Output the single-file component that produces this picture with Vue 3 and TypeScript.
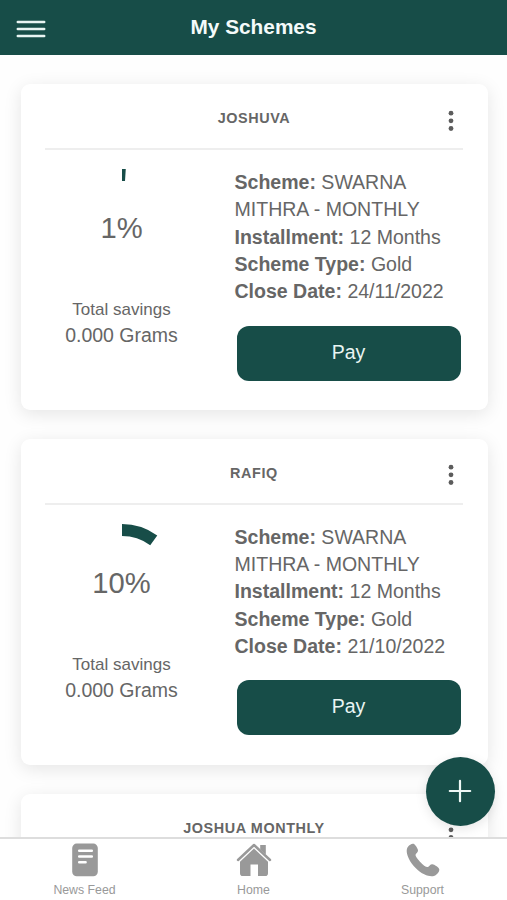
<script setup lang="ts">
import { computed, ref } from 'vue'

interface SchemeDetails {
  percent: number
  scheme: string
  installment: string
  type: string
  closeDate: string
  savings: string
}

interface Scheme {
  owner: string
  details?: SchemeDetails
}

const schemes = ref<Scheme[]>([
  {
    owner: 'JOSHUVA',
    details: { percent: 1, scheme: 'SWARNA MITHRA - MONTHLY', installment: '12 Months', type: 'Gold', closeDate: '24/11/2022', savings: '0.000 Grams' },
  },
  {
    owner: 'RAFIQ',
    details: { percent: 10, scheme: 'SWARNA MITHRA - MONTHLY', installment: '12 Months', type: 'Gold', closeDate: '21/10/2022', savings: '0.000 Grams' },
  },
  { owner: 'JOSHUA MONTHLY' },
])

// Progress arc, clockwise from twelve o'clock
function arc(percent: number): string {
  const a = (percent / 100) * Math.PI * 2
  const r = 54
  return `M60 ${60 - r} A${r} ${r} 0 ${percent > 50 ? 1 : 0} 1 ${60 + r * Math.sin(a)} ${60 - r * Math.cos(a)}`
}

const cards = computed(() => schemes.value.map((s) => ({ ...s, path: s.details ? arc(s.details.percent) : '' })))
</script>

<template>
  <div class="screen">
    <header class="topbar">
      <button class="menu" aria-label="Menu">
        <svg width="30" height="18" viewBox="0 0 30 18">
          <path d="M1.8 1.9H28.2M1.8 9H28.2M1.8 16.1H28.2" stroke="#e9f5f3" stroke-width="2.5" stroke-linecap="round" />
        </svg>
      </button>
      <h1>My Schemes</h1>
    </header>

    <main class="list">
      <article v-for="card in cards" :key="card.owner" class="card">
        <div class="card-head">
          <h2>{{ card.owner }}</h2>
          <button class="more" aria-label="More">
            <svg width="6" height="22" viewBox="0 0 6 22" fill="#5c5c5c">
              <circle cx="3" cy="3.2" r="2.4" />
              <circle cx="3" cy="10.8" r="2.4" />
              <circle cx="3" cy="18.5" r="2.4" />
            </svg>
          </button>
        </div>
        <div v-if="card.details" class="card-body">
          <div class="progress">
            <div class="ring">
              <svg width="120" height="120" viewBox="0 0 120 120">
                <path :d="card.path" fill="none" stroke="#174d48" stroke-width="12" />
              </svg>
              <span class="percent">{{ card.details.percent }}%</span>
            </div>
            <div class="savings-label">Total savings</div>
            <div class="savings">{{ card.details.savings }}</div>
          </div>
          <div class="details">
            <p><b>Scheme:</b> {{ card.details.scheme }}</p>
            <p><b>Installment:</b> {{ card.details.installment }}</p>
            <p><b>Scheme Type:</b> {{ card.details.type }}</p>
            <p><b>Close Date:</b> {{ card.details.closeDate }}</p>
            <button class="pay">Pay</button>
          </div>
        </div>
      </article>
    </main>

    <nav class="tabs">
      <a class="tab">
        <svg width="36" height="36" viewBox="0 0 36 36">
          <rect x="5.2" y="1.6" width="25.6" height="32.6" rx="4.5" fill="#999" />
          <path d="M12.2 8.7H24.8M12.2 14.6H24.8M12.2 20.2H18.6" stroke="#fff" stroke-width="2.5" stroke-linecap="round" />
        </svg>
        <span>News Feed</span>
      </a>
      <a class="tab">
        <svg width="36" height="36" viewBox="0 0 36 36" fill="#999">
          <path d="M24.2 3H29.8V12.6L24.2 7.6Z" />
          <path d="M2 18L18 3L34 18" fill="none" stroke="#999" stroke-width="2.4" stroke-linecap="round" stroke-linejoin="round" />
          <path d="M18 6.6L32 19.8V31.2A2.8 2.8 0 0 1 29.2 34H22V22.5H14.5V34H6.8A2.8 2.8 0 0 1 4 31.2V19.8Z" />
        </svg>
        <span>Home</span>
      </a>
      <a class="tab">
        <svg width="36" height="36" viewBox="0 0 36 36" fill="#999">
          <path d="M3 4.7C4.5 2.8 6.8 1.3 8.5 1.8C10.1 2.3 12.4 6 13 8C13.5 10 11.2 11.2 10.6 12.6C10.1 13.8 11.8 16.4 15 19.7C18.4 23.2 21.3 25.5 22.8 25C24.3 24.5 25.2 22 27.4 22.2C29.4 22.4 33.6 25.2 34.2 27C34.8 29 32.8 31.6 31 32.9C28.4 34.7 24.4 34.7 19.2 32.2C13.6 29.5 7.1 23.3 4 16.9C1.5 11.7 .9 7.4 3 4.7Z" />
        </svg>
        <span>Support</span>
      </a>
    </nav>

    <button class="fab" aria-label="Add">
      <svg width="24" height="24" viewBox="0 0 24 24">
        <path d="M12 1.8V22.2M1.8 12H22.2" stroke="#eef8f6" stroke-width="2.2" stroke-linecap="round" />
      </svg>
    </button>
  </div>
</template>

<style>
body {
  margin: 0;
  background: #fff;
}
</style>

<style scoped>
.screen {
  position: relative;
  display: flex;
  flex-direction: column;
  width: 100%;
  height: 900px;
  overflow: hidden;
  background: #fefefe;
  color: #666;
  font-family: 'Liberation Sans', Arial, sans-serif;
}
button {
  border: 0;
  padding: 0;
  background: none;
  font: inherit;
  display: flex;
  align-items: center;
  justify-content: center;
}
h1,
h2,
p {
  margin: 0;
}
.topbar {
  flex: none;
  display: grid;
  grid-template-columns: 60px 1fr 60px;
  align-items: center;
  height: 54.5px;
  background: #174d48;
}
.topbar h1 {
  text-align: center;
  color: #f4fbfa;
  font-size: 20.8px;
  line-height: 26px;
  padding-bottom: 3px;
}
.menu {
  height: 56px;
  width: 62px;
  padding-top: 1px;
}
.list {
  flex: 1;
  min-height: 0;
  overflow: hidden;
  display: flex;
  flex-direction: column;
  gap: 29px;
  padding: 29.5px 19.5px 0 20.5px;
}
.card {
  flex: none;
  box-sizing: border-box;
  height: 325.8px;
  padding: 0 24.5px;
  border-radius: 9px;
  background: #fff;
  box-shadow: 0 4px 18px rgba(0, 0, 0, 0.1);
}
.card-head {
  display: grid;
  grid-template-columns: 26px 1fr 26px;
  align-items: center;
  height: 64.4px;
  border-bottom: 2px solid #eee;
}
.card-head h2 {
  grid-column: 2;
  text-align: center;
  font-size: 14.4px;
  letter-spacing: 0.6px;
  line-height: 20px;
  padding-top: 4px;
}
.more {
  padding: 9px 0 0 1px;
}
.card-body {
  display: grid;
  grid-template-columns: 153px 1fr;
  column-gap: 36.5px;
}
.progress {
  text-align: center;
}
.ring {
  display: grid;
  place-items: center;
  height: 120px;
  margin-top: 18.6px;
  margin-left: 1px;
}
.ring > * {
  grid-area: 1 / 1;
}
.percent {
  font-size: 29.2px;
  line-height: 34px;
  padding-bottom: 1px;
  margin-right: 1px;
}
.savings-label {
  margin-top: 9px;
  font-size: 17px;
  line-height: 24px;
}
.savings {
  font-size: 19.5px;
  line-height: 27px;
}
.details {
  padding-top: 18.6px;
  font-size: 19.55px;
  line-height: 27.3px;
}
.pay {
  width: 224px;
  height: 55px;
  margin: 20.2px 0 0 2px;
  padding-bottom: 2px;
  border-radius: 12px;
  background: #174d48;
  color: #e9f5f3;
}
.tabs {
  flex: none;
  box-sizing: border-box;
  display: grid;
  grid-template-columns: repeat(3, 1fr);
  height: 63px;
  border-top: 2px solid #ddd;
  background: #fff;
  color: #999;
}
.tab {
  display: flex;
  flex-direction: column;
  align-items: center;
  padding-top: 3px;
  font-size: 12.3px;
  line-height: 18px;
}
.tab span {
  margin-top: 3px;
}
.fab {
  position: absolute;
  right: 12.5px;
  bottom: 74.5px;
  width: 69px;
  height: 69px;
  border-radius: 50%;
  background: #174d48;
  box-shadow: 0 3px 12px rgba(0, 0, 0, 0.1);
}
</style>
